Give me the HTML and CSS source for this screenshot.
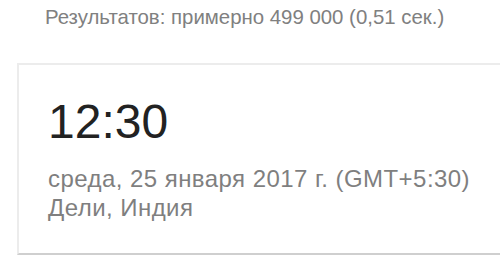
FILE: index.html
```html
<!DOCTYPE html>
<html lang="ru">
<head>
<meta charset="utf-8">
<link rel="stylesheet" href="styles.css">
</head>
<body>
<div class="stats">Результатов: примерно 499 000 (0,51 сек.)</div>
<div class="card">
  <div class="time">12:30</div>
  <div class="date">среда, 25 января 2017 г. (GMT+5:30)</div>
  <div class="place">Дели, Индия</div>
</div>
</body>
</html>
```
FILE: styles.css
```css
html, body {
  margin: 0;
  padding: 0;
  background: #ffffff;
  overflow: hidden;
}
body {
  width: 500px;
  height: 256px;
  font-family: "Liberation Sans", Arial, sans-serif;
}
.stats {
  padding: 5px 0 0 45px;
  font-size: 20.4px;
  line-height: 24px;
  color: #808080;
}
.card {
  margin: 34px 0 0 17px;
  width: 483px;
  height: 192px;
  box-sizing: border-box;
  border: 2px solid #ececec;
  border-right: none;
  border-bottom: 2px solid #cfcfcf;
  padding: 29px 0 0 29px;
}
.time {
  font-size: 48px;
  line-height: 56px;
  color: #222222;
}
.date, .place {
  font-size: 24px;
  line-height: 29px;
  letter-spacing: 0.45px;
  color: #7f7f7f;
}
.date {
  margin-top: 14px;
}
```
